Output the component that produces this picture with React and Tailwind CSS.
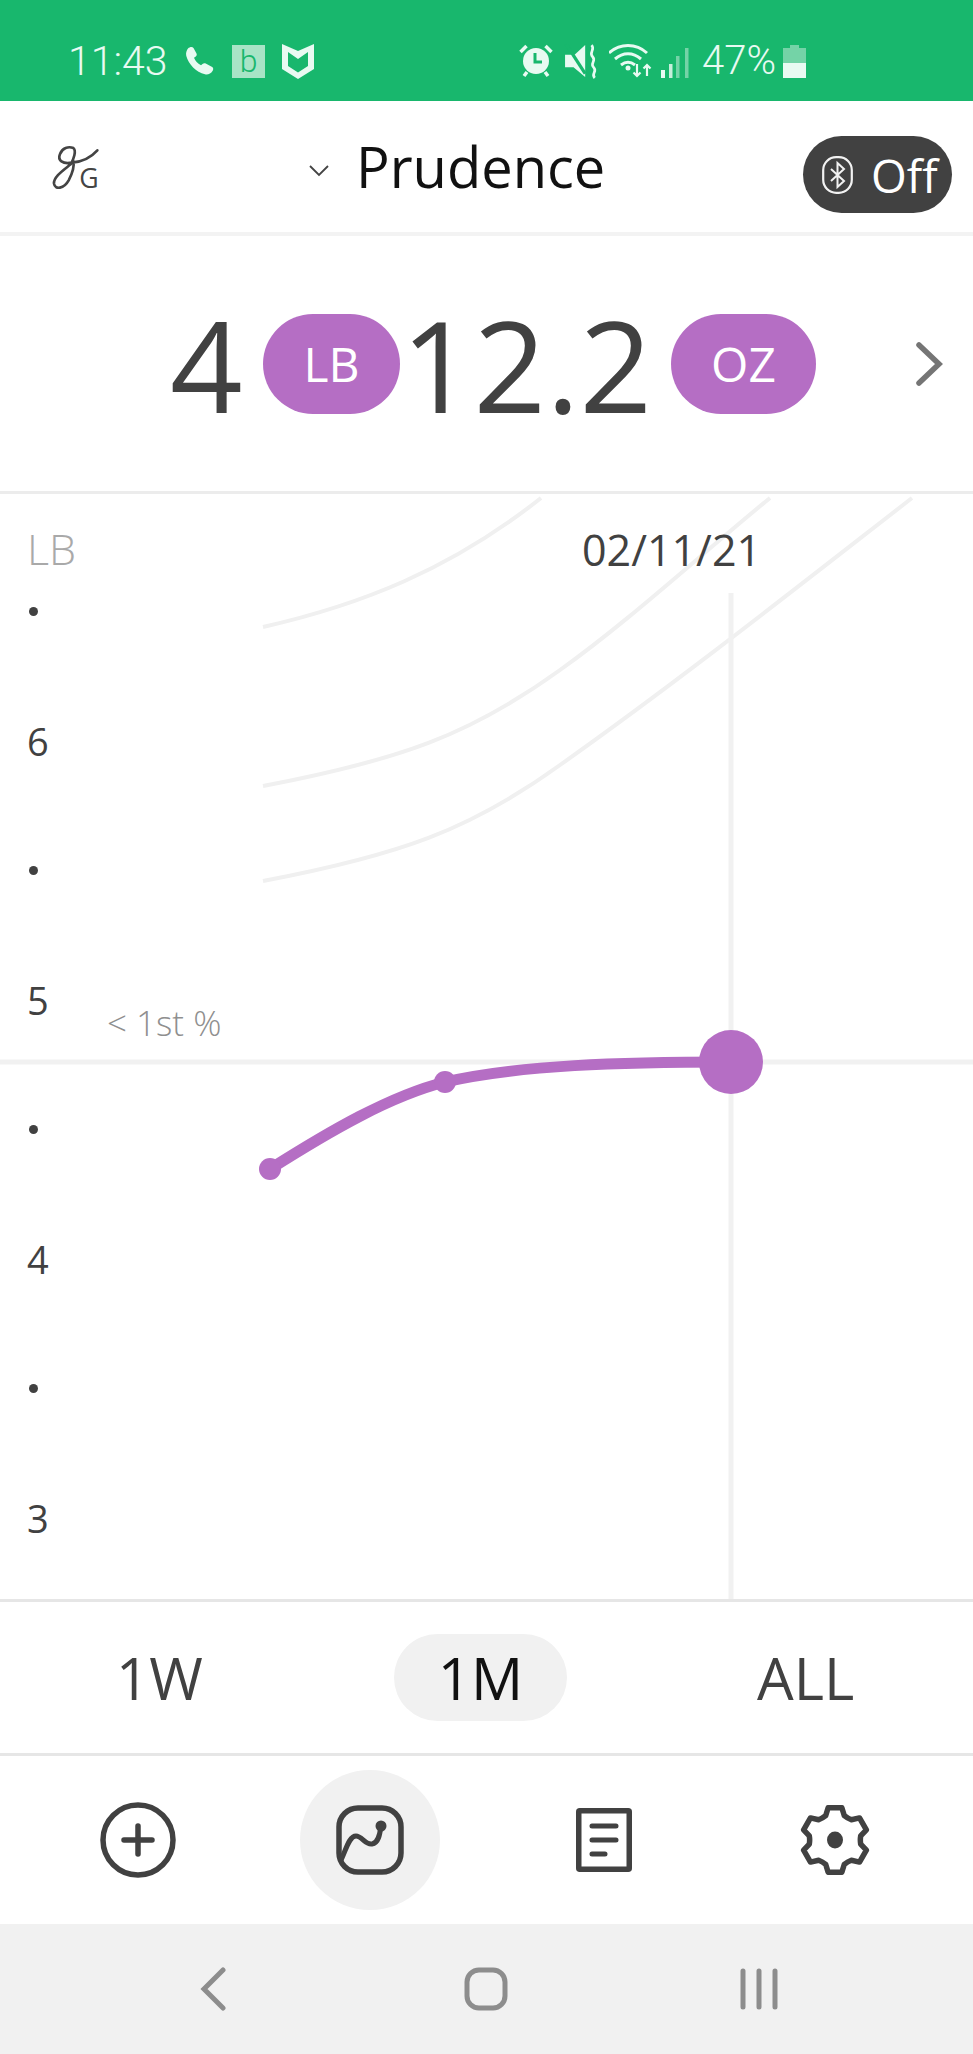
import React from "react";

const F = { fontFamily: '"Open Sans", sans-serif' };

function gearPath(cx, cy, R, r) {
  const pts = [];
  for (let i = 0; i < 6; i++) {
    const a = -90 + i * 60;
    const rad = (d) => (d * Math.PI) / 180;
    const p = (rr, d) => `${(cx + rr * Math.cos(rad(d))).toFixed(2)} ${(cy + rr * Math.sin(rad(d))).toFixed(2)}`;
    pts.push(`${i === 0 ? "M" : "L"}${p(R, a - 12)}`);
    pts.push(`L${p(R, a + 12)}`);
    pts.push(`L${p(r + 1, a + 21)}`);
    pts.push(`Q${p(r, a + 30)} ${p(r + 1, a + 39)}`);
  }
  return pts.join(" ") + "Z";
}

function StatusBar() {
  return (
    <div className="h-[101px] bg-[#18b76d] flex items-center text-[#e8faf2] shrink-0 pt-[21px]">
      <span className="ml-[68px] w-[99px] text-[41px] leading-none font-['Roboto',sans-serif] font-light whitespace-nowrap">11:43</span>
      <svg className="ml-[18px]" width="30" height="30" viewBox="0 0 30 30" fill="#e8faf2">
        <path d="M3 2.500C5 .5 7.500.5 8.500 2l3 5.500c.6 1.300.2 2.300-1 3.200l-1.500 1c1.300 3 3.500 5.500 7 7.500l1.500-1.200c1-.8 2-1 3.200-.5l6.500 3.500c1.300 1 1.300 2.500.3 4-1.500 2.500-4.500 4-7.500 3.300C11 26.500 3.500 18 1.300 10 .6 7 1.500 4.500 3 2.500z" />
      </svg>
      <div className="ml-[17px] w-[33px] h-[33px] bg-[#a8e4c6] flex items-center justify-center text-[#18b76d] text-[32px] leading-none font-['Roboto',sans-serif] font-light">b</div>
      <svg className="ml-[17px]" width="32" height="36" viewBox="0 0 32 36">
        <path d="M0 1l16 7 16-7v25l-16 10L0 26z" fill="#e8faf2" />
        <path d="M6 9l10 7 10-7v14l-10 6.500L6 23z" fill="#18b76d" />
      </svg>
      <svg className="ml-[205px]" width="34" height="34" viewBox="0 0 34 34" fill="none" stroke="#e8faf2">
        <circle cx="17" cy="17" r="13" fill="#e8faf2" stroke="none" />
        <path d="M16 9v9h7" strokeWidth="3" stroke="#18b76d" />
        <path d="M1.500 8l6-6M32.500 8l-6-6M5 32l3-4M29 32l-3-4" strokeWidth="3.500" />
      </svg>
      <svg className="ml-[11px]" width="36" height="36" viewBox="0 0 32 34" fill="none" stroke="#e8faf2">
        <path d="M0 11h9L19 2v30L8 23H0z" fill="#e8faf2" stroke="none" />
        <path d="M1 1l18 28" strokeWidth="3" stroke="#18b76d" />
        <path d="M25 2c4 4-3 7 1 11s-3 6 1 10-3 6 1 10" strokeWidth="2.500" />
      </svg>
      <svg className="ml-[9px]" width="44" height="34" viewBox="0 0 44 34" fill="none" stroke="#e8faf2">
        <path d="M0 9c11-10 27-10 38 0M6 15c8-7 18-7 26 0M12 21c5-4 9-4 14 0" strokeWidth="3" />
        <circle cx="19" cy="24" r="2.500" fill="#e8faf2" stroke="none" />
        <path d="M28 20v12M24.500 28.500l3.500 3.500 3.500-3.500M38 32V21M34.500 24.500l3.500-3.500 3.500 3.500" strokeWidth="2.200" />
      </svg>
      <svg className="ml-[8px]" width="28" height="34" viewBox="0 0 28 34">
        <rect x="0" y="26" width="4" height="8" fill="#e8faf2" />
        <rect x="8" y="20" width="3.500" height="14" fill="#c6eedb" />
        <rect x="15" y="12" width="3.500" height="22" fill="#74d3a7" />
        <rect x="24" y="4" width="3.500" height="30" fill="#74d3a7" />
      </svg>
      <span className="ml-[13px] w-[74px] text-[40px] leading-none font-['Roboto',sans-serif] font-light whitespace-nowrap">47%</span>
      <svg className="ml-[7px]" width="23" height="33" viewBox="0 0 23 33">
        <path d="M7 0h9v3h7v30H0V3h7z" fill="#74d3a7" />
        <rect x="0" y="18" width="23" height="15" fill="#e8faf2" />
      </svg>
    </div>
  );
}

function Header() {
  return (
    <div className="h-[131px] bg-white flex items-center relative shrink-0" style={F}>
      <svg className="ml-[40px]" width="80" height="70" viewBox="0 0 240 210" fill="none">
        <path d="M172 55C150 80 120 90 95 92C68 97 52 85 60 66C67 48 85 42 100 48C110 56 101 82 92 97C70 115 40 135 42 155C45 175 72 170 86 145C98 122 104 105 100 88" stroke="#444" strokeWidth="8" strokeLinecap="round" />
        <text x="118" y="168" fontSize="80" fontFamily="Open Sans, sans-serif" fill="#444">G</text>
      </svg>
      <svg className="ml-[189px] mt-[8px]" width="20" height="12" viewBox="0 0 20 12" fill="none" stroke="#444" strokeWidth="1.800">
        <path d="M1 1l9 9 9-9" />
      </svg>
      <span className="ml-[27px] text-[56px] leading-none text-[#111] mt-[-2px]">Prudence</span>
      <div className="absolute left-[803px] top-[35px] w-[149px] h-[77px] rounded-full bg-[#414141] flex items-center text-white">
        <svg className="ml-[19px]" width="31" height="38" viewBox="0 0 31 38" fill="none" stroke="#f2f2f2">
          <rect x="1.200" y="1.200" width="28.600" height="35.600" rx="13" strokeWidth="2.200" />
          <path d="M9 13l13 12-6.500 6V7L22 13 9 25" strokeWidth="2" />
        </svg>
        <span className="ml-[18px] text-[46px] leading-none font-normal">Off</span>
      </div>
    </div>
  );
}

function Value() {
  const pill = "h-[100px] rounded-[50px] bg-[#b56ec4] text-white flex items-center justify-center text-[48px] font-normal leading-none";
  return (
    <div className="h-[262px] bg-white flex items-center border-t-[4px] border-b-[3px] border-t-[#f3f3f3] border-b-[#ececec] relative shrink-0 text-[#414141]" style={F}>
      <span className="ml-[170px] w-[87px] text-[127px] font-normal leading-none">4</span>
      <div className={pill + " w-[137px] ml-[6px]"}>LB</div>
      <span className="ml-[1px] w-[270px] text-[127px] font-normal leading-none">12.2</span>
      <div className={pill + " w-[145px]"}>OZ</div>
      <svg className="ml-[98px]" width="30" height="44" viewBox="0 0 30 44" fill="none" stroke="#757575" strokeWidth="5.500" strokeLinecap="round">
        <path d="M5 3l20 19-20 19" />
      </svg>
    </div>
  );
}

function Chart() {
  const ticks = [
    { dot: true }, { t: "6" }, { dot: true }, { t: "5" }, { dot: true }, { t: "4" }, { dot: true }, { t: "3" },
  ];
  return (
    <div className="h-[1105px] bg-white relative shrink-0 text-[#414141] overflow-hidden" style={F}>
      <div className="absolute left-0 top-0 w-full h-full">
        <svg width="973" height="1105" viewBox="0 494 973 1105" fill="none">
          <g stroke="#f0f0f0" strokeWidth="4">
            <path d="M263 627C360 605 450 570 541 498" />
            <path d="M263 786C400 760 470 735 560 670C630 620 700 555 770 498" />
            <path d="M263 881C400 855 470 830 560 765C680 680 800 585 912 498" />
          </g>
          <path d="M0 1062H973" stroke="#f1f1f1" strokeWidth="5" />
          <path d="M731 593V1599" stroke="#f1f1f1" strokeWidth="5" />
          <path d="M270 1169C330 1131 390 1096 445 1082C520 1065 620 1062 731 1062" stroke="#b56ec4" strokeWidth="11" />
          <circle cx="270" cy="1169" r="11" fill="#b56ec4" />
          <circle cx="445" cy="1082" r="11" fill="#b56ec4" />
          <circle cx="731" cy="1062" r="32" fill="#b56ec4" />
        </svg>
      </div>
      <div className="relative pl-[27px] pt-[31px]">
        <div className="h-[46px] mb-[-24px] flex items-center text-[43px] font-light leading-none text-[#a9a9a9]">LB</div>
        {ticks.map((k, i) => (
          <div key={i} className="h-[129.500px] flex items-center text-[38px] font-normal leading-none">
            {k.dot ? <div className="w-[9px] h-[9px] rounded-full bg-[#414141] ml-[2px]" /> : k.t}
          </div>
        ))}
      </div>
      <div className="absolute left-[582px] top-[34px] text-[43px] font-normal leading-[44px]">02/11/21</div>
      <div className="absolute left-[107px] top-[511px] text-[35px] font-light leading-[36px] text-[#8f8f8f]">&lt; 1st %</div>
    </div>
  );
}

function Range() {
  return (
    <div className="h-[157px] bg-white border-t-[3px] border-b-[3px] border-[#e6e6e6] flex items-center text-[58px] font-normal leading-none text-[#414141] shrink-0" style={F}>
      <span className="ml-[116px] w-[278px]">1W</span>
      <div className="w-[173px] h-[87px] rounded-full bg-[#f1f1f1] flex items-center justify-center text-[#111]">1M</div>
      <span className="ml-[190px]">ALL</span>
    </div>
  );
}

function Nav() {
  const s = { fill: "none", stroke: "#414141", strokeWidth: 5.5 };
  return (
    <div className="h-[168px] bg-white flex items-center shrink-0">
      <svg className="ml-[100px]" width="76" height="76" viewBox="0 0 76 76" {...s}>
        <circle cx="38" cy="38" r="35" />
        <path d="M38 24v28M24 38h28" strokeLinecap="round" />
      </svg>
      <div className="ml-[124px] w-[140px] h-[140px] rounded-full bg-[#f1f1f1] flex items-center justify-center">
        <svg width="68" height="70" viewBox="0 0 68 70" {...s}>
          <rect x="3" y="3" width="62" height="64" rx="19" />
          <path d="M5 55C10 45 13 31 20 31C26 31 29 40 36 39C43 38 44 28 45 21" strokeWidth="5" />
          <circle cx="45" cy="21" r="5.500" fill="#414141" stroke="none" />
        </svg>
      </div>
      <svg className="ml-[136px]" width="56" height="64" viewBox="0 0 56 64" {...s}>
        <rect x="2.750" y="2.750" width="50.500" height="58.500" rx="1" />
        <path d="M16 18h24M16 32h24M16 46h13" strokeWidth="5" strokeLinecap="round" />
      </svg>
      <svg className="ml-[168px]" width="70" height="70" viewBox="0 0 70 70" {...s}>
        <path d={gearPath(35, 35, 33, 25)} strokeLinejoin="round" />
        <ellipse cx="35" cy="35" rx="8" ry="8.500" fill="#414141" stroke="none" />
      </svg>
    </div>
  );
}

function SysBar() {
  const s = { fill: "none", stroke: "#8d8d8d", strokeWidth: 5, strokeLinecap: "round" };
  return (
    <div className="h-[130px] bg-[#f1f1f1] flex items-center shrink-0">
      <svg className="ml-[200px]" width="26" height="44" viewBox="0 0 26 44" {...s}>
        <path d="M23 3L4 22l19 19" />
      </svg>
      <svg className="ml-[238px]" width="44" height="44" viewBox="0 0 44 44" {...s}>
        <rect x="3" y="3" width="38" height="38" rx="12" />
      </svg>
      <svg className="ml-[231px]" width="40" height="42" viewBox="0 0 40 42" {...s}>
        <path d="M4 3v36M20 3v36M36 3v36" />
      </svg>
    </div>
  );
}

export default function App() {
  return (
    <div className="w-[973px] h-[2054px] flex flex-col overflow-hidden bg-white">
      <StatusBar />
      <Header />
      <Value />
      <Chart />
      <Range />
      <Nav />
      <SysBar />
    </div>
  );
}
